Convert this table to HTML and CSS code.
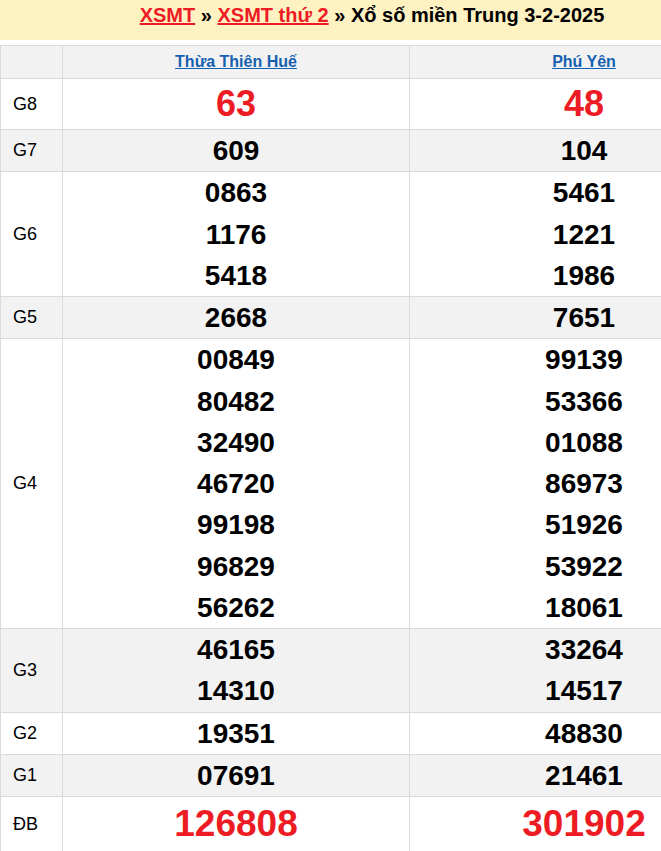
FILE: index.html
```html
<!DOCTYPE html>
<html lang="vi">
<head>
<meta charset="utf-8">
<title>XSMT 3-2-2025</title>
<link rel="stylesheet" href="styles.css">
</head>
<body>
<div class="page">
  <h2 class="title"><a href="#">XSMT</a> » <a href="#">XSMT thứ 2</a> » Xổ số miền Trung 3-2-2025</h2>
  <table class="kq">
    <colgroup><col class="c-lbl"><col class="c-p"><col class="c-p2"></colgroup>
    <thead>
      <tr class="gray"><th></th><th><a href="#">Thừa Thiên Huế</a></th><th><a href="#">Phú Yên</a></th></tr>
    </thead>
    <tbody>
      <tr class="g8"><td class="lbl">G8</td><td><div class="n red">63</div></td><td><div class="n red">48</div></td></tr>
      <tr class="gray"><td class="lbl">G7</td><td><div class="n">609</div></td><td><div class="n">104</div></td></tr>
      <tr><td class="lbl">G6</td><td><div class="n">0863</div><div class="n">1176</div><div class="n">5418</div></td><td><div class="n">5461</div><div class="n">1221</div><div class="n">1986</div></td></tr>
      <tr class="gray"><td class="lbl">G5</td><td><div class="n">2668</div></td><td><div class="n">7651</div></td></tr>
      <tr><td class="lbl">G4</td>
        <td><div class="n">00849</div><div class="n">80482</div><div class="n">32490</div><div class="n">46720</div><div class="n">99198</div><div class="n">96829</div><div class="n">56262</div></td>
        <td><div class="n">99139</div><div class="n">53366</div><div class="n">01088</div><div class="n">86973</div><div class="n">51926</div><div class="n">53922</div><div class="n">18061</div></td></tr>
      <tr class="gray"><td class="lbl">G3</td><td><div class="n">46165</div><div class="n">14310</div></td><td><div class="n">33264</div><div class="n">14517</div></td></tr>
      <tr><td class="lbl">G2</td><td><div class="n">19351</div></td><td><div class="n">48830</div></td></tr>
      <tr class="gray"><td class="lbl">G1</td><td><div class="n">07691</div></td><td><div class="n">21461</div></td></tr>
      <tr class="db"><td class="lbl">ĐB</td><td><div class="n red">126808</div></td><td><div class="n red">301902</div></td></tr>
    </tbody>
  </table>
</div>
</body>
</html>
```
FILE: styles.css
```css
html, body {
  margin: 0;
  padding: 0;
  background: #fff;
}
body {
  font-family: "Liberation Sans", Arial, sans-serif;
  color: #000;
}
.page {
  width: 758px;
}
.title {
  margin: 0 0 5px 0;
  height: 36px;
  padding: 4px 14px 0 0;
  background: #fff2c2;
  font-size: 20px;
  font-weight: bold;
  line-height: 23px;
  text-align: center;
}
.title a {
  color: #ed1c24;
  text-decoration: underline;
}
.kq {
  width: 758px;
  border-collapse: collapse;
  table-layout: fixed;
}
.c-lbl { width: 62px; }
.c-p { width: 347px; }
.c-p2 { width: 349px; }
.kq th, .kq td {
  border: 1px solid #dadada;
  padding: 0;
  text-align: center;
  vertical-align: middle;
}
.kq th {
  height: 32px;
  font-size: 16px;
  font-weight: bold;
}
.kq th a {
  color: #1560b0;
  text-decoration: underline;
}
.gray td, .gray th {
  background: #f2f2f2;
}
.kq td.lbl {
  text-align: left;
  padding-left: 12px;
  font-size: 18px;
}
.n {
  font-size: 28px;
  font-weight: bold;
  line-height: 41.25px;
}
.g8 .n {
  font-size: 36px;
  line-height: 50px;
}
.red {
  color: #ed1c24;
}
.db .n {
  font-size: 37px;
  line-height: 54px;
}
```
